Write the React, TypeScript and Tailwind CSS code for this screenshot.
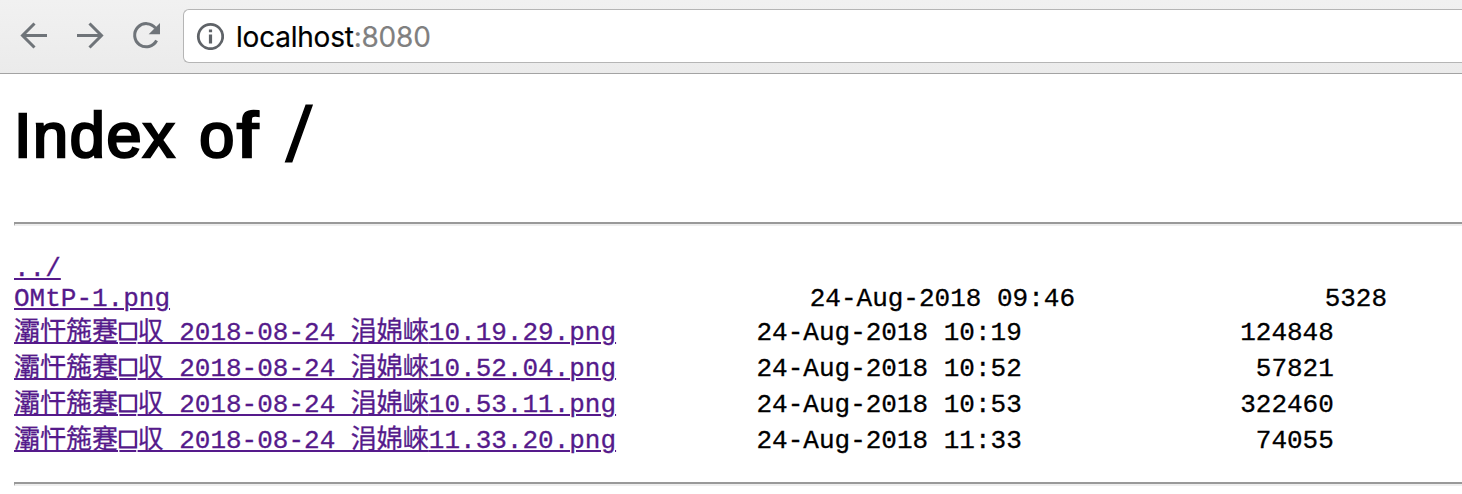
type Entry = { name: string; gap: string; date: string; size: string };

const shots: Entry[] = [
  { name: "10.19.29.png", gap: " ".repeat(9), date: "24-Aug-2018 10:19", size: "124848" },
  { name: "10.52.04.png", gap: " ".repeat(9), date: "24-Aug-2018 10:52", size: "57821" },
  { name: "10.53.11.png", gap: " ".repeat(9), date: "24-Aug-2018 10:53", size: "322460" },
  { name: "11.33.20.png", gap: " ".repeat(9), date: "24-Aug-2018 11:33", size: "74055" },
];

const link =
  "text-[#551a8b] underline decoration-2 underline-offset-[2px] [-webkit-text-stroke:0.3px_#551a8b]";

function Toolbar() {
  return (
    <header className="flex h-[74px] items-start border-b border-[#a3a3a3] bg-linear-to-b from-[#f1f1f1] to-[#ebebeb]">
      <svg className="mt-[9px] h-[54px] w-[183px] shrink-0" viewBox="0 9 183 54" fill="none">
        <g stroke="#6f7479" strokeWidth="3">
          <path d="M47 35.500H23M34.500 23.500L22.500 35.500L34.500 47.500" />
          <path d="M77 35.500H101M89.500 23.500L101.500 35.500L89.500 47.500" />
          <path d="M155.500 28.200A11.600 11.600 0 1 0 156.600 40.500" />
        </g>
        <path d="M160 23V34.300H148.700Z" fill="#6f7479" />
      </svg>
      <div className="mt-[9px] flex h-[54px] flex-1 items-center rounded-l-[6px] border border-r-0 border-[#b5b5b5] bg-white pl-[12px]">
        <svg className="h-[28px] w-[28px]" viewBox="0 0 28 28" fill="none">
          <circle cx="14.500" cy="14.500" r="12.200" stroke="#5f6368" strokeWidth="2.800" />
          <path d="M14.500 12.500V21.500M14.500 7.500V10.300" stroke="#5f6368" strokeWidth="3.200" />
        </svg>
        <span className="ml-[12px] pt-[2px] font-['Inter',sans-serif] text-[28px] leading-[36px] tracking-[-0.220px] text-black [-webkit-text-stroke:0.2px]">
          localhost<span className="text-[#808080]">:8080</span>
        </span>
      </div>
    </header>
  );
}

export default function App() {
  return (
    <div className="h-[494px] w-full overflow-hidden bg-white">
      <Toolbar />
      <main className="pl-[14px]">
        <h1 className="h-[148px] pt-[24px] font-['Liberation_Sans',sans-serif] text-[63px] leading-[74px] font-normal tracking-[1.600px] text-black [-webkit-text-stroke:2.600px_black] [word-spacing:4px]">
          Index <span className="tracking-[3px]">o</span>
          <span className="inline-block origin-left scale-x-120">f</span>{" "}
          <span className="ml-[8px] inline-block translate-y-[4px] -skew-x-5 text-[77px] leading-[60px] [-webkit-text-stroke:1.500px_black]">
            /
          </span>
        </h1>
        <div className="h-[4px] border-t-2 border-b-2 border-l border-t-[#999] border-b-[#eee] border-l-[#999]" />
        <pre className="h-[256px] pt-[28px] font-['Liberation_Mono','Noto_Sans_CJK_SC',monospace] text-[26px] text-black [-webkit-text-stroke:0.3px_black]">
          <div className="h-[30px] leading-[30px]">
            <a className={link}>../</a>
          </div>
          <div className="mb-px h-[30px] leading-[30px]">
            <a className={link}>OMtP-1.png</a>
            {" ".repeat(41)}24-Aug-2018 09:46{" ".repeat(16)}5328
          </div>
          {shots.map((s) => (
            <div key={s.name} className="h-[36px] leading-[36px]">
              <a className={link}>
                灞忓箷蹇<span className="px-[1.400px] text-[28px] leading-none [-webkit-text-stroke:1.200px_#551a8b] [text-decoration-skip-ink:none]">□</span>収 2018-08-24 涓婂崍{s.name}
              </a>
              {s.gap}
              {s.date}
              {s.size.padStart(20)}
            </div>
          ))}
        </pre>
        <div className="h-[4px] border-t-2 border-b-2 border-l border-t-[#999] border-b-[#eee] border-l-[#999]" />
      </main>
    </div>
  );
}
